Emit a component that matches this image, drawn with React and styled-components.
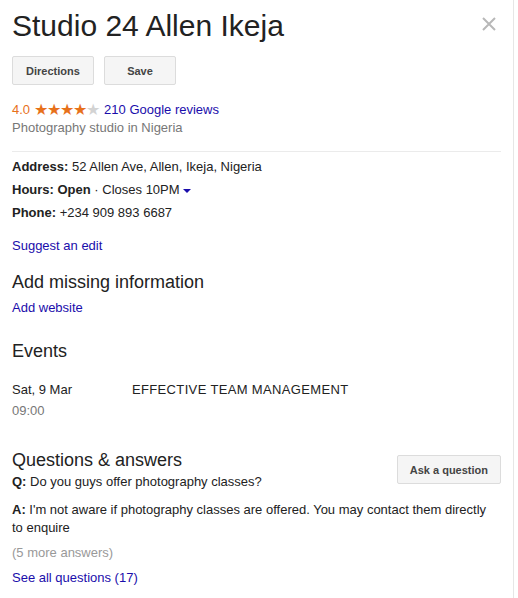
import React from "react";
import styled, { createGlobalStyle } from "styled-components";

const Global = createGlobalStyle`
  body {
    margin: 0;
    background: #fff;
    font-family: Arial, "Liberation Sans", sans-serif;
    color: #222;
  }
`;

const Panel = styled.div`
  position: relative;
  box-sizing: border-box;
  width: 514px;
  min-height: 598px;
  padding: 8px 12px 0 12px;
  border-right: 1px solid #e6e6e6;
  font-size: 13px;
`;

const Title = styled.h1`
  margin: 0;
  font-size: 30px;
  font-weight: normal;
  line-height: 36px;
  color: #222;
`;

const Close = styled.button`
  position: absolute;
  top: 15px;
  right: 15px;
  width: 18px;
  height: 18px;
  padding: 0;
  border: 0;
  background: none;
  svg {
    display: block;
  }
`;

const Actions = styled.div`
  display: flex;
  gap: 10px;
  margin-top: 12px;
`;

const Button = styled.button`
  box-sizing: border-box;
  height: 29px;
  min-width: ${(p) => p.$w || 0}px;
  margin-top: ${(p) => p.$mt || 0}px;
  padding: 0 12px;
  border: 1px solid #dcdcdc;
  border-radius: 2px;
  background: #f5f5f5;
  color: #444;
  font-family: Arial, "Liberation Sans", sans-serif;
  font-size: 11px;
  font-weight: bold;
`;

const Rating = styled.div`
  display: flex;
  align-items: center;
  margin-top: 16px;
  line-height: 18px;
`;

const Score = styled.span`
  color: #e7711b;
  margin-right: 4px;
`;

const Stars = styled.span`
  font-size: 16px;
  letter-spacing: -1px;
  margin-right: 5px;
  color: #e7711b;
  span {
    color: #d3d3d3;
  }
`;

const Link = styled.a`
  color: #1a0dab;
  text-decoration: none;
  cursor: pointer;
`;

const Muted = styled.div`
  color: #777;
  line-height: 18px;
`;

const Divider = styled.hr`
  margin: 14px 0 3px;
  border: 0;
  border-top: 1px solid #ebebeb;
`;

const Fact = styled.div`
  line-height: 23px;
  b {
    font-weight: bold;
  }
`;

const Caret = styled.span`
  display: inline-block;
  margin-left: 3px;
  vertical-align: middle;
  border-left: 4px solid transparent;
  border-right: 4px solid transparent;
  border-top: 4px solid #1a0dab;
`;

const Block = styled.div`
  margin-top: ${(p) => p.$mt || 0}px;
  line-height: 18px;
`;

const Heading = styled.h2`
  margin: 0 0 ${(p) => p.$mb || 0}px;
  font-size: 18px;
  font-weight: normal;
  line-height: 24px;
  color: #222;
`;

const Event = styled.div`
  display: grid;
  grid-template-columns: 120px 1fr;
  margin-top: 16px;
  line-height: 21px;
`;

const EventName = styled.div`
  letter-spacing: 0.35px;
`;

const Time = styled.div`
  color: #777;
`;

const QaHead = styled.div`
  display: flex;
  justify-content: space-between;
  align-items: flex-start;
  margin-top: 27px;
`;

const Answer = styled.div`
  margin-top: 10px;
  line-height: 18px;
  width: 488px;
`;

const Gray = styled.div`
  color: #999;
  margin-top: 7px;
  line-height: 18px;
`;

export default function App() {
  return (
    <Panel>
      <Global />
      <Title>Studio 24 Allen Ikeja</Title>
      <Close aria-label="Close">
        <svg width="18" height="18" viewBox="0 0 18 18">
          <path d="M3 3L15 15M15 3L3 15" stroke="#b8b8b8" strokeWidth="2" />
        </svg>
      </Close>
      <Actions>
        <Button $w={82}>Directions</Button>
        <Button $w={72}>Save</Button>
      </Actions>
      <Rating>
        <Score>4.0</Score>
        <Stars>
          ★★★★<span>★</span>
        </Stars>
        <Link>210 Google reviews</Link>
      </Rating>
      <Muted>Photography studio in Nigeria</Muted>
      <Divider />
      <Fact>
        <b>Address:</b> 52 Allen Ave, Allen, Ikeja, Nigeria
      </Fact>
      <Fact>
        <b>Hours: Open</b> · Closes 10PM
        <Caret />
      </Fact>
      <Fact>
        <b>Phone:</b> +234 909 893 6687
      </Fact>
      <Block $mt={13}>
        <Link>Suggest an edit</Link>
      </Block>
      <Block $mt={15}>
        <Heading $mb={5}>Add missing information</Heading>
        <Link>Add website</Link>
      </Block>
      <Block $mt={22}>
        <Heading>Events</Heading>
        <Event>
          <div>Sat, 9 Mar</div>
          <EventName>EFFECTIVE TEAM MANAGEMENT</EventName>
          <Time>09:00</Time>
        </Event>
      </Block>
      <QaHead>
        <div>
          <Heading $mb={1}>Questions &amp; answers</Heading>
          <Block>
            <b>Q:</b> Do you guys offer photography classes?
          </Block>
        </div>
        <Button $w={101} $mt={7}>
          Ask a question
        </Button>
      </QaHead>
      <Answer>
        <b>A:</b> I'm not aware if photography classes are offered. You may
        contact them directly to enquire
      </Answer>
      <Gray>(5 more answers)</Gray>
      <Block $mt={7}>
        <Link>See all questions (17)</Link>
      </Block>
    </Panel>
  );
}
